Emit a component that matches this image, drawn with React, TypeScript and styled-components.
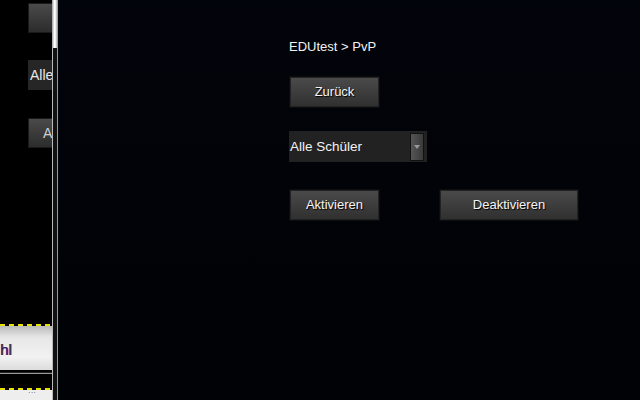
import styled, { createGlobalStyle } from "styled-components";

const GlobalStyle = createGlobalStyle`
  html, body {
    margin: 0;
    padding: 0;
    background: #02040a;
    overflow: hidden;
  }
  body {
    font-family: "Liberation Sans", Arial, sans-serif;
  }
`;

const Screen = styled.div`
  display: flex;
  width: 640px;
  height: 400px;
  background: #02040a;
`;

const SidePane = styled.div`
  width: 52px;
  height: 400px;
  background: #000;
  overflow: hidden;
  display: flex;
  flex-direction: column;
`;

const SideBody = styled.div`
  flex: 1;
  padding: 3px 0 0 28px;
  display: flex;
  flex-direction: column;
`;

const SideButton = styled.div<{ top: number }>`
  margin-top: ${(p) => p.top}px;
  width: 40px;
  height: 30px;
  box-sizing: border-box;
  border: 1px solid #1a1a1a;
  background: linear-gradient(#4a4a4a, #2c2c2c);
  color: #cfcfcf;
  font-size: 14px;
  line-height: 28px;
  padding-left: 14px;
`;

const SideSelect = styled.div`
  margin-top: 27px;
  width: 40px;
  height: 30px;
  background: #262626;
  color: #e8e8e8;
  font-size: 14px;
  line-height: 30px;
  padding-left: 2px;
`;

const Widget = styled.div`
  height: 76px;
  display: flex;
  flex-direction: column;
  background: #000;
`;

const DashLine = styled.div`
  height: 2px;
  flex-shrink: 0;
  background: repeating-linear-gradient(90deg, #e8e000 0 5px, transparent 5px 9px);
`;

const WidgetField = styled.div`
  height: 44px;
  flex-shrink: 0;
  background: linear-gradient(#b8b8b8, #e6e6e6 25%, #f2f2f2 70%, #dcdcdc);
  color: #1a237e;
  font-size: 15px;
  line-height: 48px;
  text-align: right;
  padding-right: 42px;
  text-shadow: 1px 0 0 #d33;
`;

const WidgetRule = styled.div`
  height: 6px;
  flex-shrink: 0;
  background: linear-gradient(#000 0 2px, #222 2px 3px, #999 3px 4px, #000 4px);
`;

const WidgetGap = styled.div`
  height: 12px;
  flex-shrink: 0;
  background: #000;
`;

const WidgetFoot = styled.div`
  flex: 1;
  background: #eee;
  font-size: 8px;
  line-height: 6px;
  color: #555;
  text-align: right;
  padding-right: 16px;
`;

const Divider = styled.div`
  width: 6px;
  height: 400px;
  background:
    linear-gradient(90deg, #999, #fff 40%, #eee 60%, #888) top / 100% 48px no-repeat,
    linear-gradient(90deg, #bbb 0 1px, #111 1px 5px, #999 5px);
`;

const Main = styled.main`
  flex: 1;
  padding: 39px 0 0 231px;
  display: flex;
  flex-direction: column;
  align-items: flex-start;
  background: linear-gradient(#02040b, #010205);
`;

const Breadcrumb = styled.div`
  color: #f2f2f2;
  font-size: 13px;
  line-height: 16px;
`;

const Button = styled.button<{ width: number }>`
  all: unset;
  box-sizing: border-box;
  width: ${(p) => p.width}px;
  height: 32px;
  border: 1px solid #0c0c0c;
  box-shadow: inset 0 0 0 1px #222;
  background: linear-gradient(#4b4b4b, #2f2f2f);
  color: #f4f4f4;
  font-size: 13px;
  text-align: center;
  line-height: 30px;
  text-shadow: 1px 1px 1px #000;
`;

const BackButton = styled(Button)`
  margin-top: 21px;
`;

const Select = styled.div`
  margin-top: 23px;
  width: 138px;
  height: 31px;
  box-sizing: border-box;
  background: #222;
  display: flex;
  align-items: center;
  justify-content: space-between;
  padding: 0 3px 0 1px;
  color: #f2f2f2;
  font-size: 13.5px;
`;

const SelectArrow = styled.div`
  width: 12px;
  height: 26px;
  background: linear-gradient(90deg, #555, #3a3a3a);
  border: 1px solid #111;
  display: flex;
  align-items: center;
  justify-content: center;
`;

const ButtonRow = styled.div`
  margin-top: 27px;
  display: flex;
  gap: 59px;
`;

export default function App() {
  return (
    <>
      <GlobalStyle />
      <Screen>
        <SidePane>
          <SideBody>
            <SideButton top={0} />
            <SideSelect>Alle</SideSelect>
            <SideButton top={28}>A</SideButton>
          </SideBody>
          <Widget>
            <DashLine />
            <WidgetField>hl</WidgetField>
            <WidgetRule />
            <WidgetGap />
            <DashLine />
            <WidgetFoot>···</WidgetFoot>
          </Widget>
        </SidePane>
        <Divider />
        <Main>
          <Breadcrumb>EDUtest &gt; PvP</Breadcrumb>
          <BackButton width={91}>Zurück</BackButton>
          <Select>
            <span>Alle Schüler</span>
            <SelectArrow>
              <svg width="6" height="4" viewBox="0 0 6 4">
                <path d="M0 0h6L3 4z" fill="#999" />
              </svg>
            </SelectArrow>
          </Select>
          <ButtonRow>
            <Button width={91}>Aktivieren</Button>
            <Button width={140}>Deaktivieren</Button>
          </ButtonRow>
        </Main>
      </Screen>
    </>
  );
}
